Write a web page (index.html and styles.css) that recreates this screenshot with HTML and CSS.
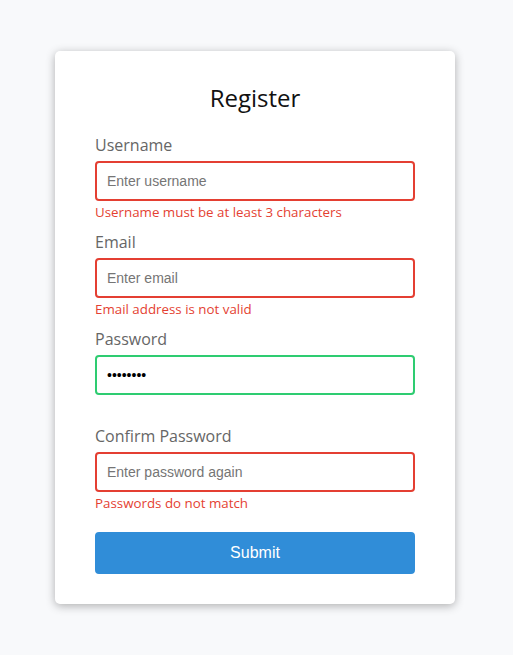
FILE: index.html
```html
<!DOCTYPE html>
<html lang="en">
<head>
<meta charset="UTF-8">
<title>Register</title>
<link rel="stylesheet" href="styles.css">
</head>
<body>
<div class="container">
  <form class="form">
    <h2 class="title">Register</h2>
    <div class="form-control error">
      <label for="username">Username</label>
      <input type="text" id="username" placeholder="Enter username">
      <small>Username must be at least 3 characters</small>
    </div>
    <div class="form-control error">
      <label for="email">Email</label>
      <input type="text" id="email" placeholder="Enter email">
      <small>Email address is not valid</small>
    </div>
    <div class="form-control success">
      <label for="password">Password</label>
      <input type="password" id="password" value="12345678" placeholder="Enter password">
      <small>Error message</small>
    </div>
    <div class="form-control error">
      <label for="password2">Confirm Password</label>
      <input type="password" id="password2" placeholder="Enter password again">
      <small>Passwords do not match</small>
    </div>
    <button type="button" class="submit">Submit</button>
  </form>
</div>
</body>
</html>
```
FILE: styles.css
```css
* {
  box-sizing: border-box;
}

body {
  background-color: #f8f9fb;
  font-family: "Open Sans", sans-serif;
  display: flex;
  align-items: center;
  justify-content: center;
  min-height: 100vh;
  margin: 0;
  padding-right: 3px;
}

.container {
  background-color: #fff;
  border-radius: 5px;
  box-shadow: 0 2px 10px rgba(0, 0, 0, 0.3);
  width: 400px;
}

.title {
  text-align: center;
  margin: 0 0 20px;
  font-size: 24px;
  font-weight: normal;
  color: #111;
}

.form {
  padding: 30px 40px;
}

.form-control {
  margin-bottom: 10px;
  padding-bottom: 20px;
  position: relative;
}

.form-control label {
  color: #666;
  display: block;
  margin-bottom: 5px;
  font-size: 16px;
}

.form-control input {
  border: 2px solid #f0f0f0;
  border-radius: 4px;
  display: block;
  width: 100%;
  padding: 10px;
  font-family: "Liberation Sans", Arial, sans-serif;
  font-size: 14px;
  color: #000;
  outline: none;
}

.form-control input::placeholder {
  color: #757575;
}

.form-control.success input {
  border-color: #2ecc71;
}

.form-control.error input {
  border-color: #e43f32;
}

.form-control small {
  color: #e43f32;
  position: absolute;
  bottom: 0;
  left: 0;
  visibility: hidden;
  font-size: 13.33px;
}

.form-control.error small {
  visibility: visible;
}

.submit {
  cursor: pointer;
  background-color: #308dd8;
  border: 2px solid #308dd8;
  border-radius: 4px;
  color: #fff;
  display: block;
  font-family: "Liberation Sans", Arial, sans-serif;
  font-size: 16px;
  padding: 10px;
  margin-top: 20px;
  width: 100%;
}
```
